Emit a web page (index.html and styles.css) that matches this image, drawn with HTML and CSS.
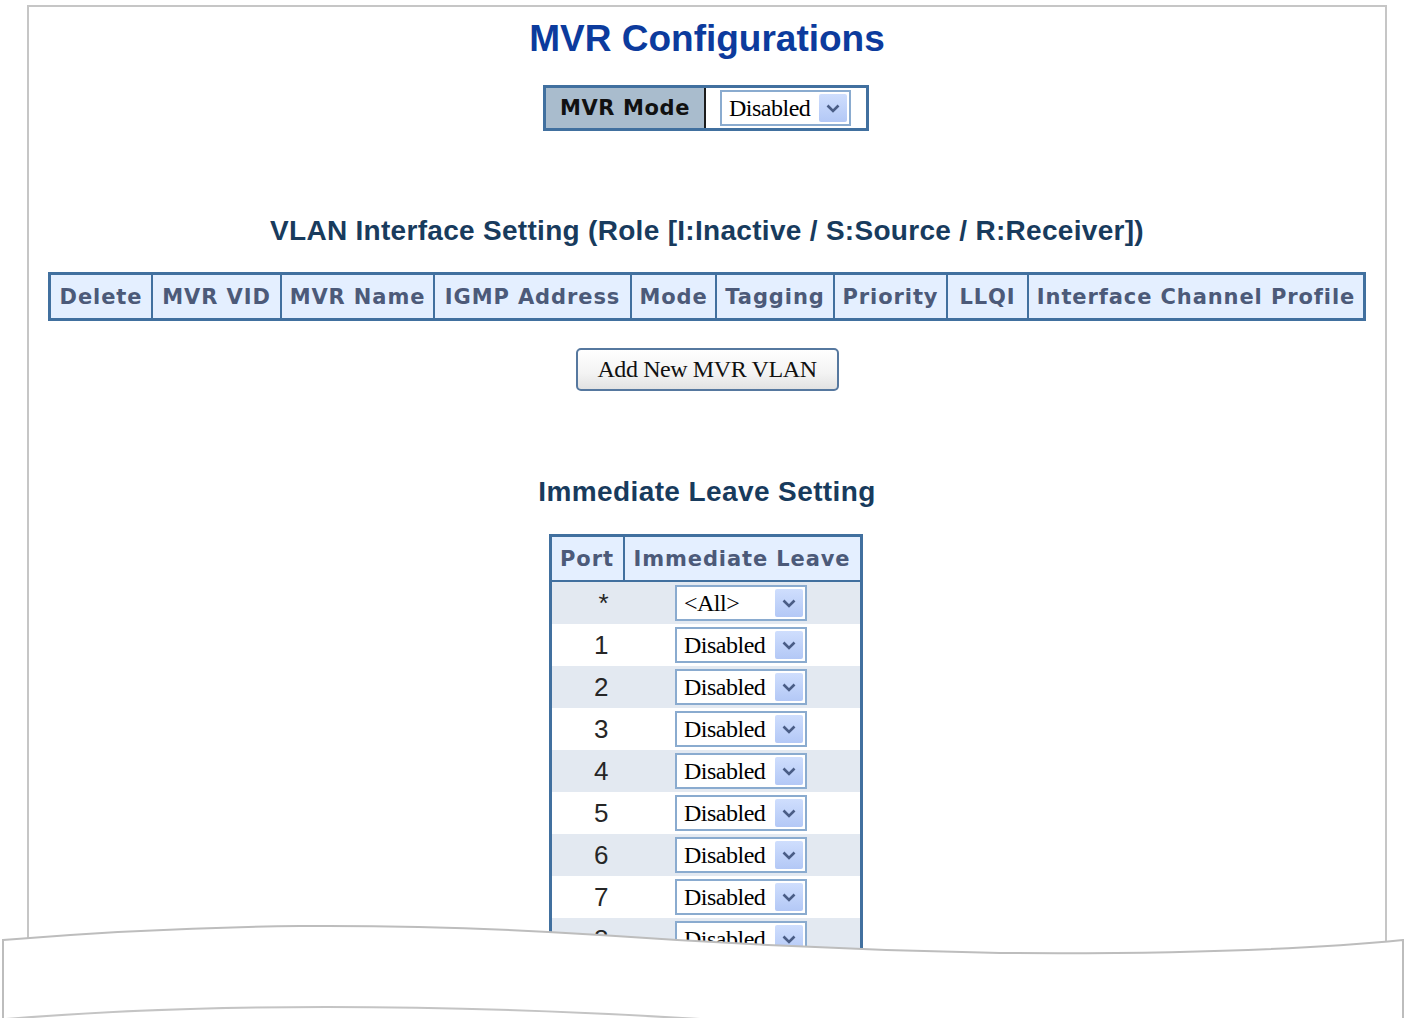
FILE: index.html
```html
<!DOCTYPE html>
<html>
<head>
<meta charset="utf-8">
<title>MVR Configurations</title>
<link rel="stylesheet" href="styles.css">
</head>
<body>
<div class="frame">
  <h1 class="title">MVR Configurations</h1>

  <table class="mode-table">
    <tr>
      <th>MVR Mode</th>
      <td>
        <div class="sel sel-mode"><span class="sel-text">Disabled</span><span class="sel-btn"><svg width="14" height="9" viewBox="0 0 14 9"><path d="M1.5 1.5 L7 7 L12.5 1.5" fill="none" stroke="#4a5d86" stroke-width="2.6"/></svg></span></div>
      </td>
    </tr>
  </table>

  <h2 class="section">VLAN Interface Setting (Role [I:Inactive / S:Source / R:Receiver])</h2>

  <table class="grid config">
    <tr>
      <th class="w-del">Delete</th>
      <th class="w-vid">MVR VID</th>
      <th class="w-name">MVR Name</th>
      <th class="w-igmp">IGMP Address</th>
      <th class="w-mode">Mode</th>
      <th class="w-tag">Tagging</th>
      <th class="w-pri">Priority</th>
      <th class="w-llqi">LLQI</th>
      <th class="w-icp">Interface Channel Profile</th>
    </tr>
  </table>

  <div class="btn-row"><button class="btn" type="button">Add New MVR VLAN</button></div>

  <h2 class="section section-il">Immediate Leave Setting</h2>

  <table class="grid il">
    <tr class="head">
      <th class="w-port">Port</th>
      <th class="w-leave">Immediate Leave</th>
    </tr>
    <tr class="alt"><td class="port">*</td><td class="cell"><div class="sel"><span class="sel-text">&lt;All&gt;</span><span class="sel-btn"><svg width="14" height="9" viewBox="0 0 14 9"><path d="M1.5 1.5 L7 7 L12.5 1.5" fill="none" stroke="#4a5d86" stroke-width="2.6"/></svg></span></div></td></tr>
    <tr><td class="port">1</td><td class="cell"><div class="sel"><span class="sel-text">Disabled</span><span class="sel-btn"><svg width="14" height="9" viewBox="0 0 14 9"><path d="M1.5 1.5 L7 7 L12.5 1.5" fill="none" stroke="#4a5d86" stroke-width="2.6"/></svg></span></div></td></tr>
    <tr class="alt"><td class="port">2</td><td class="cell"><div class="sel"><span class="sel-text">Disabled</span><span class="sel-btn"><svg width="14" height="9" viewBox="0 0 14 9"><path d="M1.5 1.5 L7 7 L12.5 1.5" fill="none" stroke="#4a5d86" stroke-width="2.6"/></svg></span></div></td></tr>
    <tr><td class="port">3</td><td class="cell"><div class="sel"><span class="sel-text">Disabled</span><span class="sel-btn"><svg width="14" height="9" viewBox="0 0 14 9"><path d="M1.5 1.5 L7 7 L12.5 1.5" fill="none" stroke="#4a5d86" stroke-width="2.6"/></svg></span></div></td></tr>
    <tr class="alt"><td class="port">4</td><td class="cell"><div class="sel"><span class="sel-text">Disabled</span><span class="sel-btn"><svg width="14" height="9" viewBox="0 0 14 9"><path d="M1.5 1.5 L7 7 L12.5 1.5" fill="none" stroke="#4a5d86" stroke-width="2.6"/></svg></span></div></td></tr>
    <tr><td class="port">5</td><td class="cell"><div class="sel"><span class="sel-text">Disabled</span><span class="sel-btn"><svg width="14" height="9" viewBox="0 0 14 9"><path d="M1.5 1.5 L7 7 L12.5 1.5" fill="none" stroke="#4a5d86" stroke-width="2.6"/></svg></span></div></td></tr>
    <tr class="alt"><td class="port">6</td><td class="cell"><div class="sel"><span class="sel-text">Disabled</span><span class="sel-btn"><svg width="14" height="9" viewBox="0 0 14 9"><path d="M1.5 1.5 L7 7 L12.5 1.5" fill="none" stroke="#4a5d86" stroke-width="2.6"/></svg></span></div></td></tr>
    <tr><td class="port">7</td><td class="cell"><div class="sel"><span class="sel-text">Disabled</span><span class="sel-btn"><svg width="14" height="9" viewBox="0 0 14 9"><path d="M1.5 1.5 L7 7 L12.5 1.5" fill="none" stroke="#4a5d86" stroke-width="2.6"/></svg></span></div></td></tr>
    <tr class="alt"><td class="port">8</td><td class="cell"><div class="sel"><span class="sel-text">Disabled</span><span class="sel-btn"><svg width="14" height="9" viewBox="0 0 14 9"><path d="M1.5 1.5 L7 7 L12.5 1.5" fill="none" stroke="#4a5d86" stroke-width="2.6"/></svg></span></div></td></tr>
    <tr><td class="port">9</td><td class="cell"><div class="sel"><span class="sel-text">Disabled</span><span class="sel-btn"><svg width="14" height="9" viewBox="0 0 14 9"><path d="M1.5 1.5 L7 7 L12.5 1.5" fill="none" stroke="#4a5d86" stroke-width="2.6"/></svg></span></div></td></tr>
  </table>
</div>

<svg class="tear" width="1405" height="110" viewBox="0 910 1405 110">
  <path d="M3 940 Q 150 928 300 926 Q 450 925 600 935 Q 800 949 1000 953 Q 1250 955 1403 940 L 1403 1030 L 3 1030 Z" fill="#ffffff"/>
  <path d="M3 1030 L3 940 Q 150 928 300 926 Q 450 925 600 935 Q 800 949 1000 953 Q 1250 955 1403 940 L 1403 1030" fill="none" stroke="#bdbdbd" stroke-width="2"/>
  <path d="M6 1019 Q 300 995 700 1019" fill="none" stroke="#c4c4c4" stroke-width="2"/>
</svg>
</body>
</html>
```

FILE: styles.css
```css
html {
  overflow: hidden;
}

body {
  margin: 0;
  background: #ffffff;
  font-family: "Liberation Sans", Arial, sans-serif;
}

.frame {
  margin: 5px 0 0 27px;
  width: 1356px;
  height: 1100px;
  border: 2px solid #c6c6c6;
  border-bottom: none;
  display: flex;
  flex-direction: column;
  align-items: center;
}

.title {
  margin: 11px 0 0;
  font-family: "Liberation Sans", Arial, sans-serif;
  font-size: 37px;
  line-height: 42px;
  font-weight: bold;
  color: #0c3b9d;
}

.mode-table {
  margin-top: 25px;
  margin-right: 2px;
  border: 3px solid #41709f;
  border-collapse: separate;
  border-spacing: 0;
}

.mode-table th {
  height: 40px;
  padding: 0 14px;
  background: #a9bccd;
  border-right: 2px solid #1c1c1c;
  font-family: "DejaVu Sans", Verdana, sans-serif;
  font-size: 21px;
  font-weight: bold;
  letter-spacing: 0.6px;
  color: #111111;
  white-space: nowrap;
}

.mode-table td {
  padding: 0 15px 0 14px;
  background: #ffffff;
}

.section {
  margin: 84px 0 0;
  font-family: "Liberation Sans", Arial, sans-serif;
  font-size: 28px;
  line-height: 32px;
  font-weight: bold;
  letter-spacing: 0.3px;
  color: #183b5d;
}

.section-il {
  margin-top: 85px;
  letter-spacing: 0.4px;
}

.grid {
  border: 3px solid #41709f;
  border-collapse: separate;
  border-spacing: 0;
  table-layout: fixed;
}

.grid th {
  box-sizing: border-box;
  height: 43px;
  padding: 0;
  background: #e4efff;
  border-left: 2px solid #41709f;
  font-family: "DejaVu Sans", Verdana, sans-serif;
  font-size: 21px;
  font-weight: bold;
  letter-spacing: 0.9px;
  color: #4c5a79;
  text-align: center;
  white-space: nowrap;
}

.grid th:first-child {
  border-left: none;
}

.w-del { width: 100px; }
.w-vid { width: 129px; }
.w-name { width: 153px; }
.w-igmp { width: 197px; }
.w-mode { width: 85px; }
.w-tag { width: 118px; }
.w-pri { width: 113px; }
.w-llqi { width: 81px; }
.w-icp { width: 336px; }
.w-port { width: 71px; }
.w-leave { width: 237px; }

.config {
  margin-top: 25px;
}

.btn-row {
  margin-top: 27px;
}

.btn {
  width: 263px;
  height: 43px;
  padding: 0;
  border: 2px solid #56789f;
  border-radius: 5px;
  background: linear-gradient(#ffffff, #f3f3f3 60%, #e2e2e2);
  font-family: "Liberation Serif", "Times New Roman", serif;
  font-size: 24px;
  letter-spacing: -0.4px;
  color: #111111;
}

.il {
  margin-top: 26px;
  margin-right: 3px;
}

.il .head th {
  height: 45px;
  border-bottom: 2px solid #41709f;
}

.il td {
  height: 42px;
  padding: 0;
  background: #ffffff;
}

.il tr.alt td {
  background: #e3e9f1;
}

.port {
  text-align: right;
  font-family: "Liberation Sans", Arial, sans-serif;
  font-size: 26px;
  color: #262626;
}

.il td.port {
  padding-right: 14px;
}

.cell {
  text-align: center;
}

.sel {
  display: inline-flex;
  align-items: center;
  width: 132px;
  height: 36px;
  box-sizing: border-box;
  border: 2px solid #8aabcf;
  background: #ffffff;
  vertical-align: middle;
}

.sel-mode {
  width: 131px;
}

.sel-text {
  flex: 1;
  text-align: left;
  padding-left: 7px;
  font-family: "Liberation Serif", "Times New Roman", serif;
  font-size: 24px;
  letter-spacing: -0.5px;
  color: #000000;
  line-height: 30px;
}

.sel-btn {
  width: 28px;
  height: 28px;
  margin-right: 2px;
  border-radius: 2px;
  background: linear-gradient(#cfdefd, #b3c8f6);
  display: flex;
  align-items: center;
  justify-content: center;
}

.tear {
  position: absolute;
  left: 0;
  top: 910px;
}
```
